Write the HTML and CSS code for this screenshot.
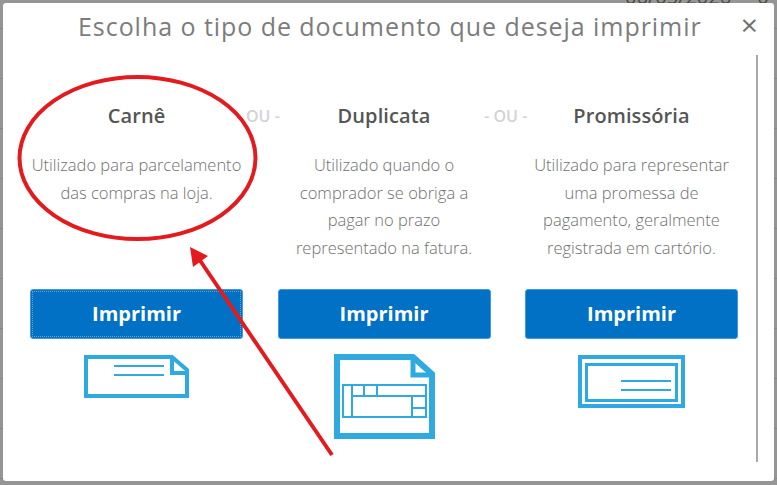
FILE: index.html
```html
<!DOCTYPE html>
<html lang="pt-BR">
  <head>
    <meta charset="UTF-8" />
    <meta name="viewport" content="width=device-width, initial-scale=1.0" />
    <title>Imprimir documento</title>
    <link rel="stylesheet" href="styles.css">
  </head>
  <body>
    <div class="backdrop-date">06/05/2026 <span class="backdrop-next">0</span></div>

    <div class="modal">
      <div class="modal-header">
        <h2 class="modal-title">Escolha o tipo de documento que deseja imprimir</h2>
        <button class="close" type="button">&times;</button>
      </div>
      <div class="modal-body">
        <div class="doc">
          <h3 class="doc-name">Carnê</h3>
          <p class="doc-text">Utilizado para parcelamento das compras na loja.</p>
          <button class="print focused" type="button">Imprimir</button>
          <svg class="icon" width="105" height="43" viewBox="0 0 105 43">
            <path class="thick" d="M2 2H88L103 15V41H2Z" stroke-width="4" />
            <path class="thick" d="M88 2V18H103" stroke-width="4" />
            <path class="thick" d="M30 11H80M30 20H80" stroke-width="2" />
          </svg>
        </div>
        <div class="or">- OU -</div>
        <div class="doc">
          <h3 class="doc-name">Duplicata</h3>
          <p class="doc-text">Utilizado quando o comprador se obriga a pagar no prazo representado na fatura.</p>
          <button class="print" type="button">Imprimir</button>
          <svg class="icon icon-tall" width="101" height="85" viewBox="0 0 101 85">
            <path class="thick" d="M3 3H79L98 20V82H3Z" stroke-width="6" />
            <path class="thick" d="M79 3V21H98" stroke-width="5" />
            <path class="thick" d="M9 31H92V63H9ZM18 31V63M18 42H92M30 31V42M43 31V42M78 42V63M78 54H92" stroke-width="2" />
          </svg>
        </div>
        <div class="or">- OU -</div>
        <div class="doc">
          <h3 class="doc-name">Promissória</h3>
          <p class="doc-text">Utilizado para representar uma promessa de pagamento, geralmente registrada em cartório.</p>
          <button class="print" type="button">Imprimir</button>
          <svg class="icon" width="107" height="53" viewBox="0 0 107 53">
            <path class="thick" d="M2 2H105V51H2Z" stroke-width="4" />
            <path class="thick" d="M8.500 9.500H98.500V45.500H8.500Z" stroke-width="3" />
            <path class="thick" d="M43 26H93M43 35H93" stroke-width="2" />
          </svg>
        </div>
      </div>
    </div>

    <!-- red marks drawn on top of the screenshot -->
    <svg class="marks" width="777" height="485" viewBox="0 0 777 485">
      <ellipse cx="137.500" cy="158" rx="118" ry="81" fill="none" stroke="#e31b1f" stroke-width="4" />
      <path d="M332 455L199 259" fill="none" stroke="#e31b1f" stroke-width="4" />
      <path d="M190 247L208 256L193 267Z" fill="#e31b1f" />
    </svg>
  </body>
</html>
```

FILE: styles.css
```css
* {
  box-sizing: border-box;
}

body {
  margin: 0;
  width: 777px;
  height: 485px;
  overflow: hidden;
  position: relative;
  padding: 3px 3px 4px;
  font-family: "Open Sans", sans-serif;
  background-color: #959595;
  background-image: repeating-linear-gradient(
    to bottom,
    transparent 0,
    transparent 28px,
    #878787 28px,
    #878787 29px,
    transparent 29px,
    transparent 50px
  );
}

.backdrop-date {
  position: absolute;
  top: -15px;
  left: 625px;
  font-size: 20px;
  line-height: 24px;
  color: #4d463e;
  white-space: nowrap;
}

.backdrop-next {
  margin-left: 21px;
}

.modal {
  position: relative;
  width: 771px;
  height: 478px;
  background: #fff;
  border-radius: 3px;
}

.modal-header {
  display: flex;
  align-items: center;
  justify-content: space-between;
  height: 52px;
  padding: 0 16px 6px 75px;
}

.modal-title {
  margin: 0;
  font-size: 25px;
  font-weight: 400;
  letter-spacing: 0.950px;
  color: #7c7c7c;
  white-space: nowrap;
}

.close {
  padding: 0;
  margin-bottom: 3px;
  border: 0;
  background: none;
  font-family: "Open Sans", sans-serif;
  font-size: 30px;
  font-weight: 400;
  line-height: 26px;
  color: #6f6f6f;
}

.modal-body {
  display: flex;
  width: 755px;
  height: 407px;
  padding: 0 18px 0 27px;
  border-right: 2px solid #a9a9a9;
}

.doc {
  display: flex;
  flex-direction: column;
  align-items: center;
  width: 213px;
  flex: none;
}

.doc-name {
  margin: 46px 0 0;
  font-size: 20px;
  line-height: 30px;
  letter-spacing: 0.100px;
  font-weight: 600;
  color: #555;
}

.doc-text {
  margin: 20px 0 0;
  height: 138px;
  font-size: 16.500px;
  font-weight: 300;
  line-height: 27.600px;
  color: #6f6f6f;
  text-align: center;
}

.print {
  width: 100%;
  height: 50px;
  flex: none;
  padding: 0 0 2px;
  border: 1px solid #3f9be0;
  border-radius: 3px;
  background: #0071c5;
  color: #fff;
  font-family: "Open Sans", sans-serif;
  font-size: 20px;
  font-weight: 700;
}

.focused {
  outline: 1px dotted #7d9dbb;
  outline-offset: -3px;
}

.icon {
  margin-top: 16px;
  flex: none;
}

.icon-tall {
  margin-top: 15px;
}

.thick {
  fill: none;
  stroke: #2eaae1;
}

.or {
  display: flex;
  justify-content: center;
  flex: none;
  width: 34.500px;
  margin-top: 49px;
  padding-right: 4px;
  height: 24px;
  font-size: 16px;
  line-height: 24px;
  font-weight: 600;
  color: #d3d3d3;
  white-space: nowrap;
}

.marks {
  position: absolute;
  top: 0;
  left: 0;
}
```
